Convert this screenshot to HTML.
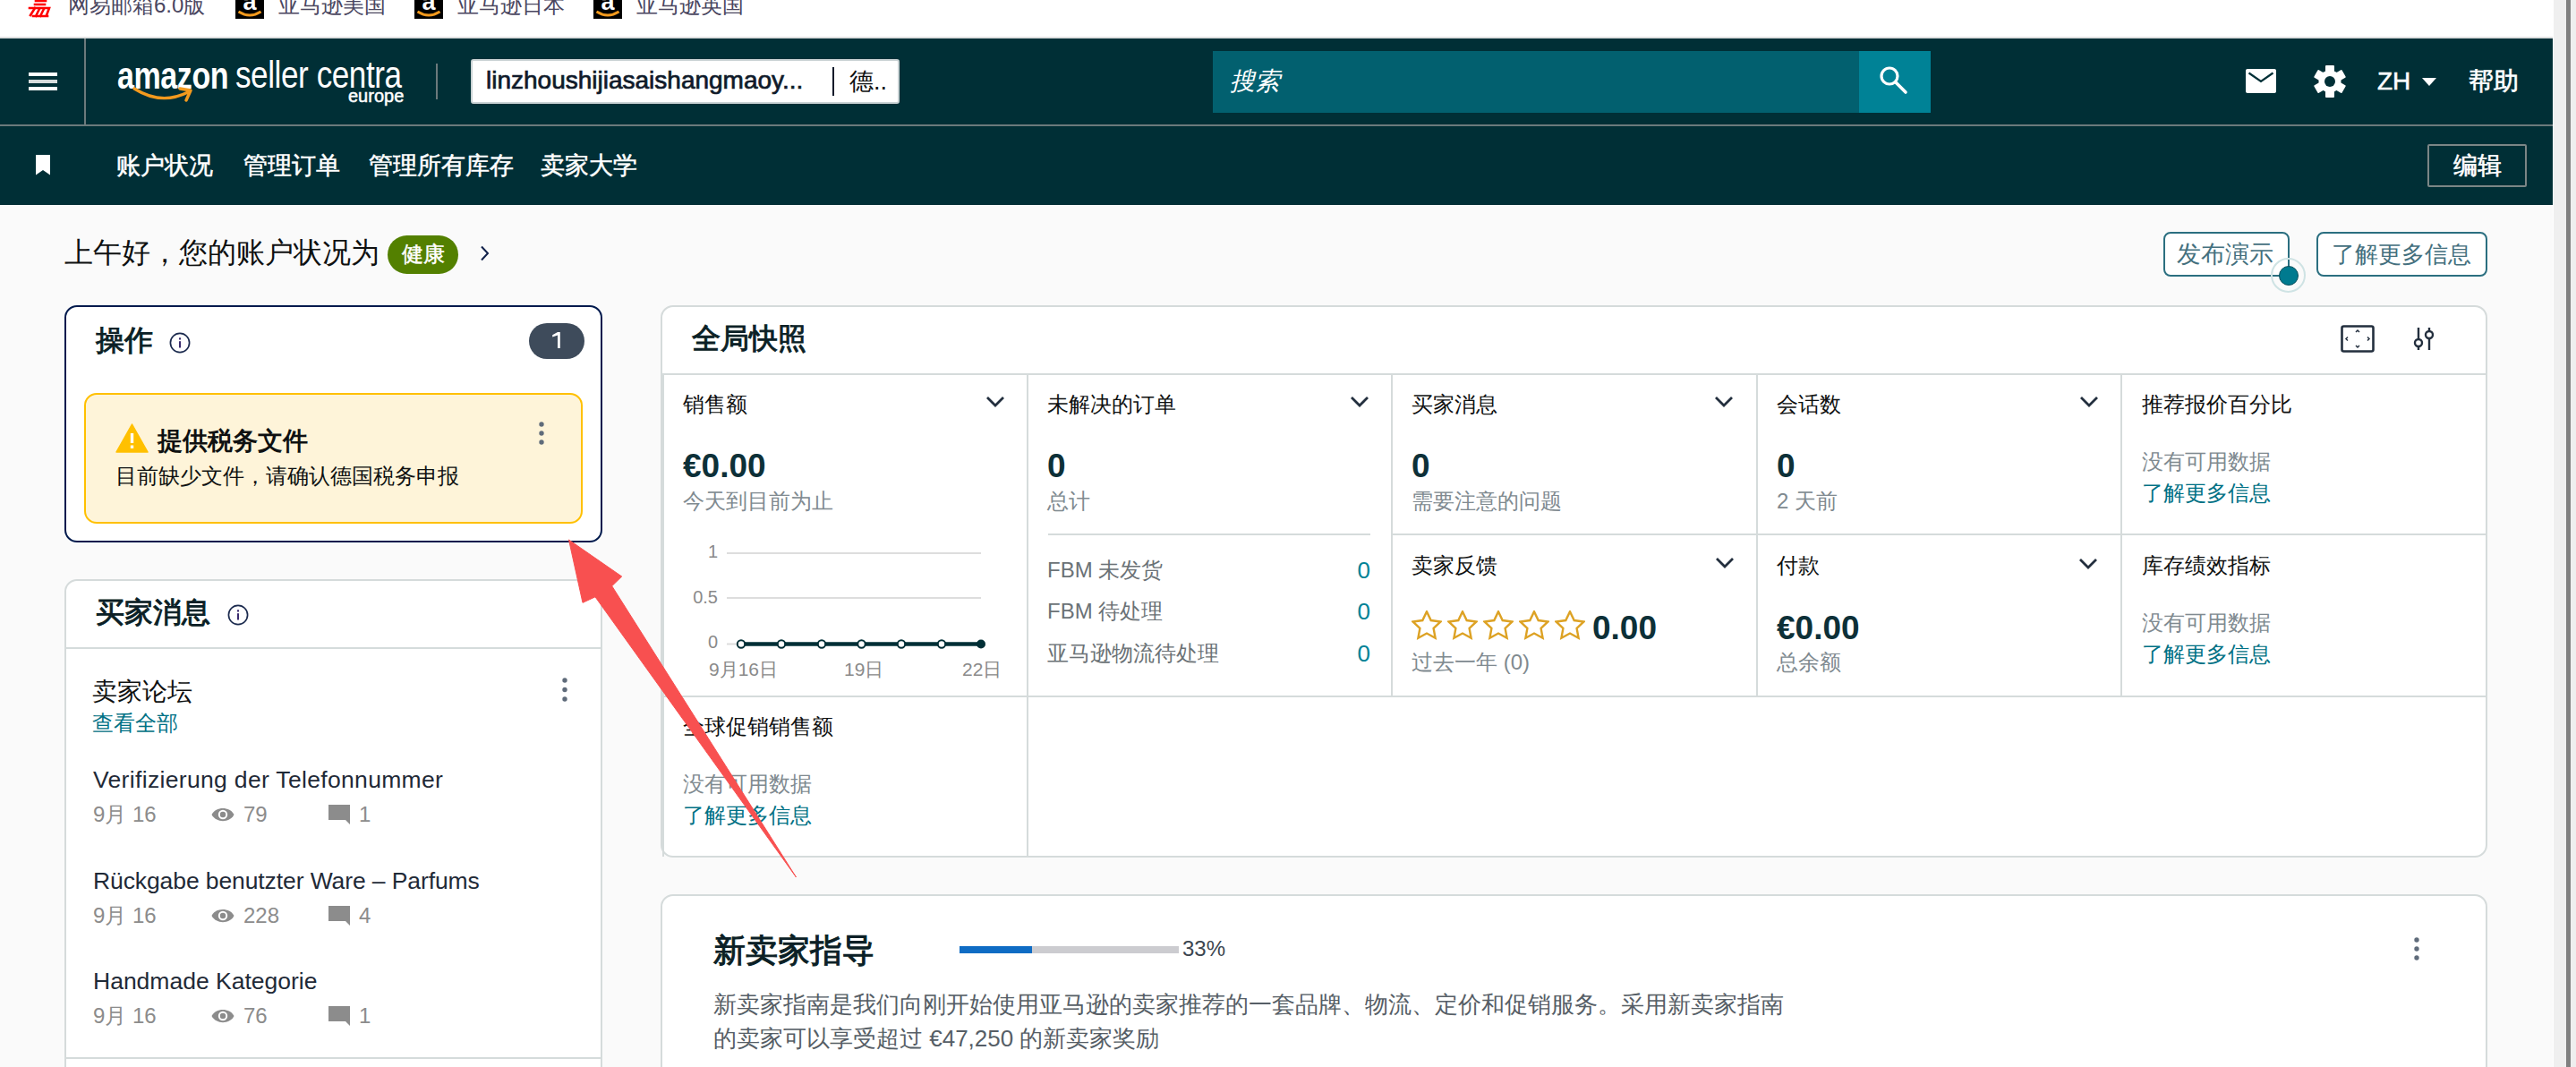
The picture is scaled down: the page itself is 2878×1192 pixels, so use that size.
<!DOCTYPE html>
<html><head><meta charset="utf-8">
<style>
*{box-sizing:border-box;margin:0;padding:0}
html,body{width:2878px;height:1192px;overflow:hidden;background:#FAFAFA;font-family:"Liberation Sans",sans-serif;color:#0F1111}
.a{position:absolute;white-space:nowrap}
#bm{left:0;top:0;width:2852px;height:43px;background:#fff;border-bottom:2px solid #E0E0E0}
#nav{left:0;top:43px;width:2852px;height:186px;background:#002F36}
#sep{left:0;top:139px;width:2852px;height:2px;background:#6B7A7C}
#sb{left:2852px;top:0;width:26px;height:1192px;background:#EFEFEF;border-left:1px solid #fff}
#thumb{left:2867px;top:0;width:5px;height:1192px;background:#808080}
.bmt{top:-10px;font-size:24px;color:#4A4660;line-height:32px}
.amz{top:0;width:32px;height:21px;background:#000;overflow:hidden}
.logo1{left:131px;top:57px;font-size:42px;font-weight:bold;color:#fff;line-height:56px;transform:scaleX(0.81);transform-origin:0 0;letter-spacing:-0.5px}
.logo2{left:263px;top:56px;font-size:42px;color:#fff;line-height:56px;transform:scaleX(0.835);transform-origin:0 0;letter-spacing:-0.5px}
.logo3{left:389px;top:95px;font-size:20px;color:#fff;-webkit-text-stroke:0.5px #fff;line-height:24px;transform:scaleX(1.0);transform-origin:0 0}
.nv{top:166px;font-size:26.5px;color:#fff;-webkit-text-stroke:0.5px #fff;line-height:38px}
.ft{left:104px;font-size:26.5px;color:#1F2A37;line-height:32px}
.mt{font-size:24px;color:#8C8C8C;line-height:30px}
.ct{font-size:24px;color:#0F1111;line-height:32px}
.cv{font-size:37px;font-weight:bold;color:#0D3038;line-height:44px}
.cs{font-size:24px;color:#808A90;line-height:32px}
.cl{font-size:24px;color:#007185;line-height:32px}
.cg{font-size:24px;color:#6B7276;line-height:32px}
.cn{font-size:26px;color:#008296;line-height:32px}
.card{position:absolute;background:#fff;border:2px solid #D5DBDB;border-radius:14px}
</style></head>
<body>
<div id="bm" class="a"></div>
<div id="nav" class="a"></div>
<div id="sep" class="a"></div>
<div id="sb" class="a"></div>
<div id="thumb" class="a"></div>


<!-- bookmarks bar -->
<svg class="a" style="left:31px;top:0" width="27" height="20" viewBox="0 0 27 20"><g stroke="#F00" stroke-width="2.6" fill="none" stroke-linecap="square"><path d="M9 1 H20 M8 5 H19"/><path d="M2 9 H24 L21 17"/><path d="M8 9 L3 17 M13 10 L9 18 M18 10 L14 18 M6 18 H22"/></g></svg>
<div class="a bmt" style="left:76px">网易邮箱6.0版</div>
<div class="a amz" style="left:263px"><svg width="32" height="21" viewBox="0 0 32 21"><text x="16" y="11" text-anchor="middle" font-family="Liberation Sans" font-weight="bold" font-size="27" fill="#fff">a</text><path d="M3.5 13 Q16 21 28.5 13" stroke="#F39A1E" stroke-width="3" fill="none"/></svg></div><div class="a bmt" style="left:311px">亚马逊美国</div>
<div class="a amz" style="left:463px"><svg width="32" height="21" viewBox="0 0 32 21"><text x="16" y="11" text-anchor="middle" font-family="Liberation Sans" font-weight="bold" font-size="27" fill="#fff">a</text><path d="M3.5 13 Q16 21 28.5 13" stroke="#F39A1E" stroke-width="3" fill="none"/></svg></div><div class="a bmt" style="left:511px">亚马逊日本</div>
<div class="a amz" style="left:663px"><svg width="32" height="21" viewBox="0 0 32 21"><text x="16" y="11" text-anchor="middle" font-family="Liberation Sans" font-weight="bold" font-size="27" fill="#fff">a</text><path d="M3.5 13 Q16 21 28.5 13" stroke="#F39A1E" stroke-width="3" fill="none"/></svg></div><div class="a bmt" style="left:711px">亚马逊英国</div>

<!-- top nav -->
<div class="a" style="left:32px;top:81px;width:32px;height:4px;background:#fff"></div>
<div class="a" style="left:32px;top:89px;width:32px;height:4px;background:#D5DCDC"></div>
<div class="a" style="left:32px;top:97px;width:32px;height:4px;background:#fff"></div>
<div class="a" style="left:94px;top:43px;width:2px;height:97px;background:#6B7A7C"></div>
<div class="a logo1">amazon</div>
<div class="a logo2">seller centra</div>
<div class="a logo3">europe</div>
<svg class="a" style="left:148px;top:96px" width="70" height="20" viewBox="0 0 70 20"><path d="M2 3 Q32 22 62 7" stroke="#F39A1E" stroke-width="3.3" fill="none" stroke-linecap="round"/><path d="M53 3 L65 5 L60 16" stroke="#F39A1E" stroke-width="3.5" fill="none" stroke-linecap="round" stroke-linejoin="round"/></svg>
<div class="a" style="left:487px;top:71px;width:2px;height:40px;background:#6B7A7C"></div>
<div class="a" style="left:526px;top:66px;width:479px;height:50px;background:#fff;border:2px solid #C9D2D4;border-radius:3px"></div>
<div class="a" style="left:543px;top:72px;font-size:28px;color:#0F1A2A;-webkit-text-stroke:0.7px #0F1A2A;line-height:36px">linzhoushijiasaishangmaoy...</div>
<div class="a" style="left:930px;top:75px;width:2px;height:32px;background:#0F1A2A"></div>
<div class="a" style="left:949px;top:73px;font-size:27px;color:#0F1111;line-height:36px">德..</div>

<div class="a" style="left:1355px;top:57px;width:722px;height:69px;background:#02606F"></div>
<div class="a" style="left:2077px;top:57px;width:80px;height:69px;background:#008296"></div>
<div class="a" style="left:1374px;top:74px;font-size:28px;color:#fff;font-style:italic;line-height:34px">搜索</div>
<svg class="a" style="left:2098px;top:72px" width="36" height="36" viewBox="0 0 36 36"><circle cx="13" cy="13" r="9" stroke="#fff" stroke-width="3.2" fill="none"/><path d="M20 20 L31 31" stroke="#fff" stroke-width="3.6" stroke-linecap="round"/></svg>

<svg class="a" style="left:2509px;top:77px" width="34" height="28" viewBox="0 0 34 28"><rect x="0" y="0" width="34" height="27" rx="2" fill="#fff"/><path d="M3.5 4.5 L17 14 L30.5 4.5" stroke="#002F36" stroke-width="2.2" fill="none"/></svg>
<svg class="a" style="left:2584px;top:71px" width="38" height="40" viewBox="-19 -20 38 40"><g fill="#fff"><circle r="12.5"/><rect x="-5" y="-18" width="10" height="9" rx="1" transform="rotate(0)"/><rect x="-5" y="-18" width="10" height="9" rx="1" transform="rotate(60)"/><rect x="-5" y="-18" width="10" height="9" rx="1" transform="rotate(120)"/><rect x="-5" y="-18" width="10" height="9" rx="1" transform="rotate(180)"/><rect x="-5" y="-18" width="10" height="9" rx="1" transform="rotate(240)"/><rect x="-5" y="-18" width="10" height="9" rx="1" transform="rotate(300)"/></g><circle r="6" fill="#002F36"/></svg>
<div class="a" style="left:2656px;top:72px;font-size:28px;color:#fff;-webkit-text-stroke:0.5px #fff;line-height:38px">ZH</div>
<svg class="a" style="left:2705px;top:86px" width="18" height="11" viewBox="0 0 18 11"><path d="M1 1 L17 1 L9 10 Z" fill="#fff"/></svg>
<div class="a" style="left:2758px;top:72px;font-size:28px;color:#fff;-webkit-text-stroke:0.6px #fff;line-height:38px">帮助</div>

<!-- second nav -->
<svg class="a" style="left:40px;top:173px" width="16" height="23" viewBox="0 0 16 23"><path d="M0 0 H16 V22.5 L8 17 L0 22.5 Z" fill="#fff"/></svg>
<div class="a nv" style="left:130px">账户状况</div>
<div class="a nv" style="left:272px">管理订单</div>
<div class="a nv" style="left:412px">管理所有库存</div>
<div class="a nv" style="left:604px">卖家大学</div>
<div class="a" style="left:2712px;top:161px;width:111px;height:48px;border:2px solid #7B8686;border-radius:2px"></div>
<div class="a" style="left:2741px;top:167px;font-size:27px;color:#fff;-webkit-text-stroke:0.6px #fff;line-height:36px">编辑</div>


<!-- greeting -->
<div class="a" style="left:72px;top:262px;font-size:32px;color:#0F1111;line-height:40px">上午好，您的账户状况为</div>
<div class="a" style="left:433px;top:263px;width:79px;height:43px;border-radius:22px;background:#538000"></div>
<div class="a" style="left:449px;top:266px;font-size:24px;color:#fff;-webkit-text-stroke:0.5px #fff;line-height:36px">健康</div>
<svg class="a" style="left:535px;top:274px" width="14" height="18" viewBox="0 0 14 18"><path d="M3 1.5 L10 9 L3 16.5" stroke="#10204A" stroke-width="2" fill="none"/></svg>

<div class="a" style="left:2417px;top:259px;width:141px;height:50px;border:2px solid #2B6F80;border-radius:8px;background:#fff"></div>
<div class="a" style="left:2432px;top:266px;font-size:27px;color:#44707E;line-height:36px">发布演示</div>
<div class="a" style="left:2537px;top:288px;width:39px;height:39px;border-radius:50%;border:2px solid #CFE3E4"></div>
<div class="a" style="left:2546px;top:297px;width:22px;height:22px;border-radius:50%;background:#007A8F;border:1.5px solid #0B4F5C"></div>
<div class="a" style="left:2588px;top:259px;width:191px;height:50px;border:2px solid #2B6F80;border-radius:8px;background:#fff"></div>
<div class="a" style="left:2605px;top:266px;font-size:26px;color:#44707E;line-height:36px">了解更多信息</div>

<!-- cards -->
<div class="card" style="left:72px;top:341px;width:601px;height:265px;border-color:#001A4D"></div>
<div class="card" style="left:72px;top:647px;width:601px;height:600px"></div>
<div class="card" style="left:738px;top:341px;width:2041px;height:617px"></div>
<div class="card" style="left:738px;top:999px;width:2041px;height:300px"></div>


<!-- 操作 card content -->
<div class="a" style="left:107px;top:360px;font-size:32px;color:#0B1F26;-webkit-text-stroke:1px #0B1F26;line-height:40px">操作</div>
<svg class="a" style="left:189px;top:371px" width="24" height="24" viewBox="0 0 24 24"><circle cx="12" cy="12" r="10.6" stroke="#1B2A4E" stroke-width="1.7" fill="none"/><rect x="11" y="10.2" width="2" height="7.3" fill="#3A2A6E"/><rect x="11" y="6.3" width="2" height="2.2" fill="#3A2A6E"/></svg>
<div class="a" style="left:591px;top:361px;width:62px;height:40px;border-radius:20px;background:#3E4B5B"></div>
<svg class="a" style="left:615px;top:370px" width="14" height="20" viewBox="0 0 14 20"><path d="M8 1 H10.8 V19 H8 V4.6 L2.2 6.6 V4.2 Z" fill="#fff"/></svg>
<div class="a" style="left:94px;top:439px;width:557px;height:146px;border:2px solid #FFC000;border-radius:14px;background:#FEF4D9"></div>
<svg class="a" style="left:129px;top:473px" width="37" height="33" viewBox="0 0 37 33"><path d="M18.5 1 L36 32 L1 32 Z" fill="#FFC000" stroke="#FFC000" stroke-width="1.5" stroke-linejoin="round"/><rect x="16.8" y="11" width="3.4" height="11" fill="#fff"/><rect x="16.8" y="24.5" width="3.4" height="3.4" fill="#fff"/></svg>
<div class="a" style="left:176px;top:476px;font-size:28px;font-weight:bold;color:#0F1111;line-height:34px">提供税务文件</div>
<svg class="a" style="left:600px;top:470px" width="10" height="28" viewBox="0 0 10 28"><circle cx="5" cy="4" r="2.7" fill="#5F6B7A"/><circle cx="5" cy="14" r="2.7" fill="#5F6B7A"/><circle cx="5" cy="24" r="2.7" fill="#5F6B7A"/></svg>
<div class="a" style="left:129px;top:516px;font-size:24px;color:#0F1111;line-height:32px">目前缺少文件，请确认德国税务申报</div>

<!-- 买家消息 card content -->
<div class="a" style="left:107px;top:664px;font-size:32px;color:#0B1F26;-webkit-text-stroke:1px #0B1F26;line-height:40px">买家消息</div>
<svg class="a" style="left:254px;top:675px" width="24" height="24" viewBox="0 0 24 24"><circle cx="12" cy="12" r="10.6" stroke="#1B2A4E" stroke-width="1.7" fill="none"/><rect x="11" y="10.2" width="2" height="7.3" fill="#3A2A6E"/><rect x="11" y="6.3" width="2" height="2.2" fill="#3A2A6E"/></svg>
<div class="a" style="left:74px;top:723px;width:597px;height:2px;background:#D5DBDB"></div>
<div class="a" style="left:103px;top:756px;font-size:28px;color:#0F1111;line-height:34px">卖家论坛</div>
<div class="a" style="left:103px;top:792px;font-size:24px;color:#007185;line-height:32px">查看全部</div>
<svg class="a" style="left:626px;top:756px" width="10" height="29" viewBox="0 0 10 29"><circle cx="5" cy="4" r="2.7" fill="#5F6B7A"/><circle cx="5" cy="14.5" r="2.7" fill="#5F6B7A"/><circle cx="5" cy="25" r="2.7" fill="#5F6B7A"/></svg>
<div class="a ft" style="top:855px;letter-spacing:0.33px">Verifizierung der Telefonnummer</div>
<div class="a mt" style="left:104px;top:895px">9月 16</div>
<svg class="a" style="left:236px;top:901px" width="26" height="18" viewBox="0 0 26 18"><path d="M0.5 9 C5 -0.5 21 -0.5 25.5 9 C21 18.5 5 18.5 0.5 9 Z" fill="#8C8C8C"/><circle cx="13" cy="9" r="5.2" fill="#fff"/><circle cx="13" cy="9" r="3.2" fill="#8C8C8C"/></svg>
<div class="a mt" style="left:272px;top:895px">79</div>
<svg class="a" style="left:367px;top:899px" width="25" height="23" viewBox="0 0 25 23"><path d="M0 0 H24 V22 L19 17 H0 Z" fill="#8C8C8C"/></svg>
<div class="a mt" style="left:401px;top:895px">1</div>
<div class="a ft" style="top:968px;letter-spacing:-0.1px">Rückgabe benutzter Ware – Parfums</div>
<div class="a mt" style="left:104px;top:1008px">9月 16</div>
<svg class="a" style="left:236px;top:1014px" width="26" height="18" viewBox="0 0 26 18"><path d="M0.5 9 C5 -0.5 21 -0.5 25.5 9 C21 18.5 5 18.5 0.5 9 Z" fill="#8C8C8C"/><circle cx="13" cy="9" r="5.2" fill="#fff"/><circle cx="13" cy="9" r="3.2" fill="#8C8C8C"/></svg>
<div class="a mt" style="left:272px;top:1008px">228</div>
<svg class="a" style="left:367px;top:1012px" width="25" height="23" viewBox="0 0 25 23"><path d="M0 0 H24 V22 L19 17 H0 Z" fill="#8C8C8C"/></svg>
<div class="a mt" style="left:401px;top:1008px">4</div>
<div class="a ft" style="top:1080px">Handmade Kategorie</div>
<div class="a mt" style="left:104px;top:1120px">9月 16</div>
<svg class="a" style="left:236px;top:1126px" width="26" height="18" viewBox="0 0 26 18"><path d="M0.5 9 C5 -0.5 21 -0.5 25.5 9 C21 18.5 5 18.5 0.5 9 Z" fill="#8C8C8C"/><circle cx="13" cy="9" r="5.2" fill="#fff"/><circle cx="13" cy="9" r="3.2" fill="#8C8C8C"/></svg>
<div class="a mt" style="left:272px;top:1120px">76</div>
<svg class="a" style="left:367px;top:1124px" width="25" height="23" viewBox="0 0 25 23"><path d="M0 0 H24 V22 L19 17 H0 Z" fill="#8C8C8C"/></svg>
<div class="a mt" style="left:401px;top:1120px">1</div>
<div class="a" style="left:74px;top:1181px;width:597px;height:2px;background:#D5DBDB"></div>


<!-- 全局快照 -->
<div class="a" style="left:773px;top:358px;font-size:32px;color:#0B1F26;-webkit-text-stroke:1px #0B1F26;line-height:40px">全局快照</div>
<svg class="a" style="left:2615px;top:363px" width="38" height="31" viewBox="0 0 38 31"><rect x="1.5" y="1.5" width="35" height="28" rx="2" stroke="#232F3E" stroke-width="2.6" fill="none"/><path d="M17 8 L19 6 L21 8 M17 23 L19 25 L21 23 M8 13.5 L6 15.5 L8 17.5 M30 13.5 L32 15.5 L30 17.5" stroke="#232F3E" stroke-width="1.5" fill="none"/></svg>
<svg class="a" style="left:2695px;top:365px" width="26" height="27" viewBox="0 0 26 27"><path d="M7 1 V26 M19 1 V26" stroke="#232F3E" stroke-width="2.4"/><circle cx="7" cy="18" r="4" fill="#fff" stroke="#232F3E" stroke-width="2.4"/><circle cx="19" cy="9" r="4" fill="#fff" stroke="#232F3E" stroke-width="2.4"/></svg>
<div class="a" style="left:740px;top:417px;width:2039px;height:2px;background:#D5DBDB"></div>
<div class="a" style="left:740px;top:419px;width:2px;height:538px;background:#D5DBDB"></div>
<div class="a" style="left:1147px;top:419px;width:2px;height:538px;background:#D5DBDB"></div>
<div class="a" style="left:1554px;top:419px;width:2px;height:359px;background:#D5DBDB"></div>
<div class="a" style="left:1962px;top:419px;width:2px;height:359px;background:#D5DBDB"></div>
<div class="a" style="left:2369px;top:419px;width:2px;height:359px;background:#D5DBDB"></div>
<div class="a" style="left:1555px;top:596px;width:1223px;height:2px;background:#D5DBDB"></div>
<div class="a" style="left:1171px;top:596px;width:360px;height:2px;background:#D5DBDB"></div>
<div class="a" style="left:740px;top:777px;width:2039px;height:2px;background:#D5DBDB"></div>
<div class="a ct" style="left:763px;top:436px">销售额</div>
<div class="a ct" style="left:1170px;top:436px">未解决的订单</div>
<div class="a ct" style="left:1577px;top:436px">买家消息</div>
<div class="a ct" style="left:1985px;top:436px">会话数</div>
<div class="a ct" style="left:2393px;top:436px">推荐报价百分比</div>
<svg class="a" style="left:1101px;top:442px" width="22" height="14" viewBox="0 0 22 14"><path d="M2 2 L11 11 L20 2" stroke="#232F3E" stroke-width="2.8" fill="none"/></svg>
<svg class="a" style="left:1508px;top:442px" width="22" height="14" viewBox="0 0 22 14"><path d="M2 2 L11 11 L20 2" stroke="#232F3E" stroke-width="2.8" fill="none"/></svg>
<svg class="a" style="left:1915px;top:442px" width="22" height="14" viewBox="0 0 22 14"><path d="M2 2 L11 11 L20 2" stroke="#232F3E" stroke-width="2.8" fill="none"/></svg>
<svg class="a" style="left:2323px;top:442px" width="22" height="14" viewBox="0 0 22 14"><path d="M2 2 L11 11 L20 2" stroke="#232F3E" stroke-width="2.8" fill="none"/></svg>
<div class="a cv" style="left:763px;top:499px">€0.00</div>
<div class="a cs" style="left:763px;top:544px">今天到目前为止</div>
<div class="a cv" style="left:1170px;top:499px">0</div>
<div class="a cs" style="left:1170px;top:544px">总计</div>
<div class="a cv" style="left:1577px;top:499px">0</div>
<div class="a cs" style="left:1577px;top:544px">需要注意的问题</div>
<div class="a cv" style="left:1985px;top:499px">0</div>
<div class="a cs" style="left:1985px;top:544px">2 天前</div>
<div class="a cs" style="left:2393px;top:500px">没有可用数据</div>
<div class="a cl" style="left:2393px;top:535px">了解更多信息</div>
<div class="a cg" style="left:1170px;top:621px">FBM 未发货</div>
<div class="a cn" style="left:1471px;top:621px;width:60px;text-align:right">0</div>
<div class="a cg" style="left:1170px;top:667px">FBM 待处理</div>
<div class="a cn" style="left:1471px;top:667px;width:60px;text-align:right">0</div>
<div class="a cg" style="left:1170px;top:714px">亚马逊物流待处理</div>
<div class="a cn" style="left:1471px;top:714px;width:60px;text-align:right">0</div>
<div class="a ct" style="left:1577px;top:616px">卖家反馈</div>
<svg class="a" style="left:1916px;top:622px" width="22" height="14" viewBox="0 0 22 14"><path d="M2 2 L11 11 L20 2" stroke="#232F3E" stroke-width="2.8" fill="none"/></svg>
<div class="a ct" style="left:1985px;top:616px">付款</div>
<svg class="a" style="left:2322px;top:623px" width="22" height="14" viewBox="0 0 22 14"><path d="M2 2 L11 11 L20 2" stroke="#232F3E" stroke-width="2.8" fill="none"/></svg>
<div class="a ct" style="left:2393px;top:616px">库存绩效指标</div>
<svg class="a" style="left:1577px;top:682px" width="34" height="34" viewBox="0 0 34 34"><path d="M17.00 1.20 L21.70 11.03 L32.50 12.46 L24.61 19.97 L26.58 30.69 L17.00 25.50 L7.42 30.69 L9.39 19.97 L1.50 12.46 L12.30 11.03 Z" fill="none" stroke="#DDA224" stroke-width="2.4" stroke-linejoin="miter"/></svg>
<svg class="a" style="left:1617px;top:682px" width="34" height="34" viewBox="0 0 34 34"><path d="M17.00 1.20 L21.70 11.03 L32.50 12.46 L24.61 19.97 L26.58 30.69 L17.00 25.50 L7.42 30.69 L9.39 19.97 L1.50 12.46 L12.30 11.03 Z" fill="none" stroke="#DDA224" stroke-width="2.4" stroke-linejoin="miter"/></svg>
<svg class="a" style="left:1657px;top:682px" width="34" height="34" viewBox="0 0 34 34"><path d="M17.00 1.20 L21.70 11.03 L32.50 12.46 L24.61 19.97 L26.58 30.69 L17.00 25.50 L7.42 30.69 L9.39 19.97 L1.50 12.46 L12.30 11.03 Z" fill="none" stroke="#DDA224" stroke-width="2.4" stroke-linejoin="miter"/></svg>
<svg class="a" style="left:1697px;top:682px" width="34" height="34" viewBox="0 0 34 34"><path d="M17.00 1.20 L21.70 11.03 L32.50 12.46 L24.61 19.97 L26.58 30.69 L17.00 25.50 L7.42 30.69 L9.39 19.97 L1.50 12.46 L12.30 11.03 Z" fill="none" stroke="#DDA224" stroke-width="2.4" stroke-linejoin="miter"/></svg>
<svg class="a" style="left:1737px;top:682px" width="34" height="34" viewBox="0 0 34 34"><path d="M17.00 1.20 L21.70 11.03 L32.50 12.46 L24.61 19.97 L26.58 30.69 L17.00 25.50 L7.42 30.69 L9.39 19.97 L1.50 12.46 L12.30 11.03 Z" fill="none" stroke="#DDA224" stroke-width="2.4" stroke-linejoin="miter"/></svg>
<div class="a cv" style="left:1779px;top:680px">0.00</div>
<div class="a cs" style="left:1577px;top:724px">过去一年 (0)</div>
<div class="a cv" style="left:1985px;top:680px">€0.00</div>
<div class="a cs" style="left:1985px;top:724px">总余额</div>
<div class="a cs" style="left:2393px;top:680px">没有可用数据</div>
<div class="a cl" style="left:2393px;top:715px">了解更多信息</div>
<div class="a ct" style="left:763px;top:796px">全球促销销售额</div>
<div class="a cs" style="left:763px;top:860px">没有可用数据</div>
<div class="a cl" style="left:763px;top:895px">了解更多信息</div>
<svg class="a" style="left:770px;top:600px" width="360" height="170" viewBox="770 600 360 170">
<g font-family="Liberation Sans" font-size="20" fill="#8A8A8A" text-anchor="end"><text x="802" y="623">1</text><text x="802" y="674">0.5</text><text x="802" y="724">0</text></g>
<path d="M812 618 H1096 M812 668 H1096 M812 719.5 H828" stroke="#DDDDDD" stroke-width="2"/>
<path d="M828 719.5 H1096" stroke="#002F36" stroke-width="4.4"/>
<g fill="#fff" stroke="#002F36" stroke-width="2"><circle cx="828" cy="719.5" r="4.2"/><circle cx="873" cy="719.5" r="4.2"/><circle cx="918" cy="719.5" r="4.2"/><circle cx="962.5" cy="719.5" r="4.2"/><circle cx="1007" cy="719.5" r="4.2"/><circle cx="1052" cy="719.5" r="4.2"/></g>
<circle cx="1096" cy="719.5" r="5" fill="#002F36"/>
<g font-family="Liberation Sans" font-size="21" fill="#8A8A8A"><text x="792" y="755">9月16日</text><text x="943" y="755">19日</text><text x="1075" y="755">22日</text></g>
</svg>


<!-- 新卖家指导 -->
<div class="a" style="left:797px;top:1040px;font-size:36px;color:#0B1F26;-webkit-text-stroke:1.1px #0B1F26;line-height:44px">新卖家指导</div>
<div class="a" style="left:1072px;top:1057px;width:245px;height:8px;background:#CCCCD0"></div>
<div class="a" style="left:1072px;top:1057px;width:81px;height:8px;background:#0F6CC4"></div>
<div class="a" style="left:1321px;top:1044px;font-size:24px;color:#3C4650;line-height:32px">33%</div>
<svg class="a" style="left:2695px;top:1046px" width="10" height="28" viewBox="0 0 10 28"><circle cx="5" cy="4" r="2.7" fill="#5F6B7A"/><circle cx="5" cy="14" r="2.7" fill="#5F6B7A"/><circle cx="5" cy="24" r="2.7" fill="#5F6B7A"/></svg>
<div class="a" style="left:797px;top:1103px;font-size:26px;color:#565E66;line-height:38px">新卖家指南是我们向刚开始使用亚马逊的卖家推荐的一套品牌、物流、定价和促销服务。采用新卖家指南<br>的卖家可以享受超过 €47,250 的新卖家奖励</div>

<!-- red arrow annotation -->
<svg class="a" style="left:0;top:0" width="2878" height="1192" viewBox="0 0 2878 1192"><path d="M635.5 603 L694.7 644 L683.7 654.7 L889.5 980 L665 666.8 L651 673.3 Z" fill="#F85050" stroke="#F85050" stroke-width="1" stroke-linejoin="round"/></svg>

</body></html>
